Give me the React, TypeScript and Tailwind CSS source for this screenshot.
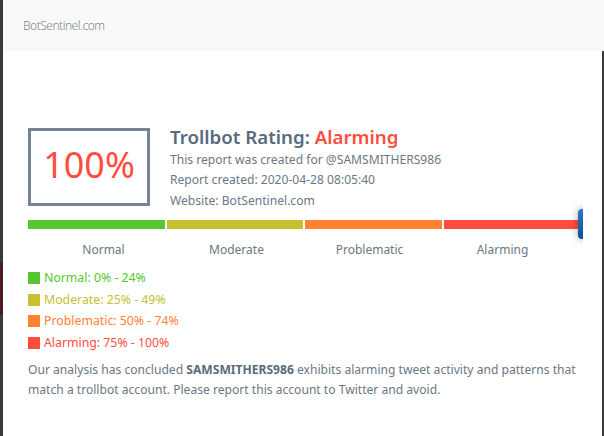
import React from "react";

const segs = [
  { label: "Normal", color: "bg-[#56c72f]" },
  { label: "Moderate", color: "bg-[#c9c02f]" },
  { label: "Problematic", color: "bg-[#fe8231]" },
  { label: "Alarming", color: "bg-[#ff4d3d]" },
];

const legend = [
  { text: "Normal: 0% - 24%", sq: "bg-[#56c72f]", tx: "text-[#56c72f]" },
  { text: "Moderate: 25% - 49%", sq: "bg-[#c9c02f]", tx: "text-[#c9c02f]" },
  { text: "Problematic: 50% - 74%", sq: "bg-[#fe8231]", tx: "text-[#fe8231]" },
  { text: "Alarming: 75% - 100%", sq: "bg-[#ff4d3d]", tx: "text-[#ff4d3d]" },
];

export default function App() {
  return (
    <div
      className="w-[604px] h-[436px] bg-[#3a3a3a] flex overflow-hidden"
      style={{ fontFamily: '"Noto Sans", "Open Sans", sans-serif' }}
    >
      <div className="w-[3px] flex flex-col">
        <div className="h-[262px]" />
        <div className="h-[53px] bg-[#4a1c22]" />
      </div>
      <div className="w-[601px] flex flex-col">
        <div className="h-[51px] bg-[#f9f9f9] flex items-center pl-[20px] text-[12px] tracking-[-0.5px] font-light text-[#7b8794]">
          BotSentinel.com
        </div>
        <div className="flex flex-1">
          <div className="w-[599px] bg-white">
            <div className="w-[580px] overflow-hidden pl-[25px] pt-[77px]">
              <div className="flex h-[78px] items-start">
                <div className="w-[122px] h-[78px] shrink-0 border-[3px] border-[#78838f] flex items-center justify-center pb-[4px] text-[36px] text-[#ff4d3d] leading-none">
                  100%
                </div>
                <div className="ml-[20px] -mt-[5px]">
                  <div className="text-[18.7px] font-semibold text-[#5a6a7d] leading-[28px]">
                    Trollbot Rating: <span className="text-[#ff4d3d]">Alarming</span>
                  </div>
                  <div className="text-[12.1px] text-[#6b7785] leading-[20.3px] -mt-[1px]">
                    <div>This report was created for @SAMSMITHERS986</div>
                    <div>Report created: 2020-04-28 08:05:40</div>
                    <div>Website: BotSentinel.com</div>
                  </div>
                </div>
              </div>
              <div className="relative mt-[14px] w-[560px]">
                <div className="flex gap-[2px] w-[552px]">
                  {segs.map((s) => (
                    <div key={s.label} className={`flex-1 h-[9px] ${s.color}`} />
                  ))}
                </div>
                <div className="absolute left-[550px] -top-[11px] w-[14px] h-[30px] rounded-[4px] bg-gradient-to-b from-[#2c7cc4] to-[#0e4f94] shadow-[0_0_8px_rgba(0,0,0,0.35)]" />
                <div className="flex w-[532px] ml-[9px] mt-[12px]">
                  {segs.map((s) => (
                    <div key={s.label} className="flex-1 text-center text-[12px] text-[#6b7785]">
                      {s.label}
                    </div>
                  ))}
                </div>
              </div>
              <div className="mt-[10px] flex flex-col gap-[3px]">
                {legend.map((l) => (
                  <div key={l.text} className="flex items-center h-[18.5px]">
                    <div className={`w-[12px] h-[12px] ${l.sq}`} />
                    <span className={`ml-[4px] text-[12.3px] ${l.tx}`}>{l.text}</span>
                  </div>
                ))}
              </div>
              <p className="mt-[8px] text-[12.1px] leading-[20px] text-[#6b7785] whitespace-nowrap">
                Our analysis has concluded <b className="font-bold text-[#5a6a7d]">SAMSMITHERS986</b> exhibits alarming tweet activity and patterns that
                <br />
                match a trollbot account. Please report this account to Twitter and avoid.
              </p>
            </div>
          </div>
          <div className="flex-1 bg-[#3a3a3a]" />
        </div>
      </div>
    </div>
  );
}
